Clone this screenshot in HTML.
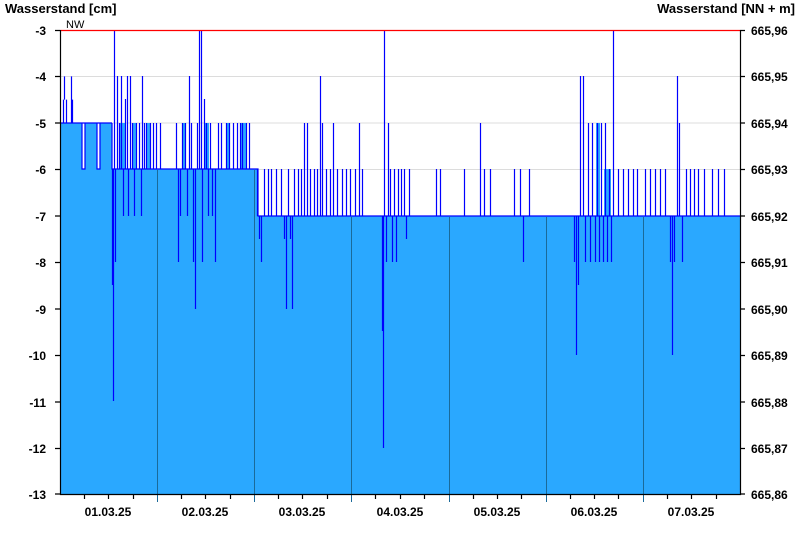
<!DOCTYPE html>
<html><head><meta charset="utf-8"><style>
html,body{margin:0;padding:0;background:#fff;}
svg{display:block;font-family:"Liberation Sans",Arial,sans-serif;font-weight:bold;font-size:12px;}
</style></head><body>
<svg width="800" height="550" viewBox="0 0 800 550" xmlns="http://www.w3.org/2000/svg">
<text x="5" y="13" font-size="13">Wasserstand [cm]</text>
<text x="795" y="13" font-size="13" text-anchor="end">Wasserstand [NN + m]</text>
<g stroke="#dcdcdc" stroke-width="1">
<path d="M60 76.5H740M60 123H740M60 169.5H740M60 216H740M60 262.5H740M60 309H740M60 355.5H740M60 402H740M60 448.5H740"/>
</g>
<path fill="#2aa8ff" d="M60 123H82V169H85V123H97V169H100V123H112V169H175V169H258V216H740V494H60Z"/>
<path fill="#2aa8ff" d="M120 169V123H126V169ZM133 169V123H137V169ZM146 169V123H150V169ZM182 169V123H186V169ZM205 169V123H209V169ZM226 169V123H230V169ZM240 169V123H246V169ZM596 216V123H600V216ZM604 216V169H611V216Z"/>
<g stroke="#0000ff" stroke-width="1.2" fill="none">
<path d="M60.5 123H112M63.5 123V99.6M64.5 99.6V76.4M66.5 99.6V123M71.5 123V76.4M72.5 99.6V123M82 123V169H85V123M97 123V169H100V123M112 123V169H175V169H258V216H740"/>
<path d="M112.5 169V285M113.5 169V401M114.5 169V30M115.5 169V262M117.5 169V76M119.5 169V123M121.5 169V76M123.5 169V216M125.5 169V99M127.5 169V76M128.5 169V216M130.5 169V76M132.5 169V123M134.5 169V216M136.5 169V123M139.5 169V123M141.5 169V216M142.5 169V76M144.5 169V123M146.5 169V123M150.5 169V123M153.5 169V123M156.5 169V123M160.5 169V123"/>
<path d="M176.5 169V123M178.5 169V262M180.5 169V216M182.5 169V123M185.5 169V123M187.5 169V216M189.5 169V76M191.5 169V123M193.5 169V262M195.5 169V309M197.5 169V123M199.5 169V30M201.5 169V30M202.5 169V262M204.5 169V99M206.5 169V123M208.5 169V216M210.5 169V123M212.5 169V216M215.5 169V262M218.5 169V123M221.5 169V123M226.5 169V123M229.5 169V123M233.5 169V123M237.5 169V123M240.5 169V123M242.5 169V123M246.5 169V123M249.5 169V123"/>
<path d="M257.5 216V169M259.5 216V239M261.5 216V262M264.5 216V169M268.5 216V169M271.5 216V169M276.5 216V169M281.5 216V169M284.5 216V239M286.5 216V309M288.5 216V169M290.5 216V239M292.5 216V309M294.5 216V169M298.5 216V169M301.5 216V169M304.5 216V123M307.5 216V123M310.5 216V169M314.5 216V169M317.5 216V169M320.5 216V76M322.5 216V123M326.5 216V169M330.5 216V169M333.5 216V123M337.5 216V169M342.5 216V169M346.5 216V169M350.5 216V169M355.5 216V169M359.5 216V123M362.5 216V169"/>
<path d="M382.5 216V331M383.5 216V448M384.5 216V30M386.5 216V262M388.5 216V123M390.5 216V169M392.5 216V262M394.5 216V169M396.5 216V262M398.5 216V169M401.5 216V169M404.5 216V169M406.5 216V239M409.5 216V169M436.5 216V169M440.5 216V169M464.5 216V169M480.5 216V123M484.5 216V169M490.5 216V169M514.5 216V169M520.5 216V169M523.5 216V262M529.5 216V169"/>
<path d="M574.5 216V262M576.5 216V355M578.5 216V285M580.5 216V76M583.5 216V76M585.5 216V262M588.5 216V123M590.5 216V262M592.5 216V123M595.5 216V262M597.5 216V123M599.5 216V262M601.5 216V123M603.5 216V262M605.5 216V123M607.5 216V262M609.5 216V169M611.5 216V262M613.5 216V30M618.5 216V169M623.5 216V169M628.5 216V169M633.5 216V169M637.5 216V169M645.5 216V169M650.5 216V169M655.5 216V169M660.5 216V169M665.5 216V169M670.5 216V262M672.5 216V355M674.5 216V262M677.5 216V76M679.5 216V123M682.5 216V262M686.5 216V169M690.5 216V169M694.5 216V169M698.5 216V169M704.5 216V169M712.5 216V169M718.5 216V169M724.5 216V169"/>
</g>
<g stroke="#1a6a9a" stroke-width="1">
<path d="M157.5 170V502M254.5 170V502M351.5 217V502M449.5 217V502M546.5 217V502M643.5 217V502"/>
</g>
<path d="M60 30.5H740" stroke="#ff0000" stroke-width="1.2"/>
<text x="66" y="28" font-weight="normal" font-size="11">NW</text>
<g stroke="#000" stroke-width="1.2" fill="none">
<path d="M60.5 30V494.5H740.5V30"/>
<path d="M55 30.5H60M55 76.5H60M55 123H60M55 169.5H60M55 216H60M55 262.5H60M55 309H60M55 355.5H60M55 402H60M55 448.5H60M55 494H60"/>
<path d="M740 30.5H745M740 76.5H745M740 123H745M740 169.5H745M740 216H745M740 262.5H745M740 309H745M740 355.5H745M740 402H745M740 448.5H745M740 494H745"/>
<path d="M84.5 494V499M108.5 494V499M133.5 494V499M181.5 494V499M205.5 494V499M230.5 494V499M278.5 494V499M302.5 494V499M327.5 494V499M375.5 494V499M400.5 494V499M424.5 494V499M473.5 494V499M497.5 494V499M521.5 494V499M570.5 494V499M594.5 494V499M618.5 494V499M667.5 494V499M691.5 494V499M716.5 494V499"/>
</g>
<g text-anchor="end">
<text x="46" y="35">-3</text><text x="46" y="81">-4</text><text x="46" y="128">-5</text><text x="46" y="174">-6</text><text x="46" y="221">-7</text><text x="46" y="267">-8</text><text x="46" y="314">-9</text><text x="46" y="360">-10</text><text x="46" y="407">-11</text><text x="46" y="453">-12</text><text x="46" y="499">-13</text>
</g>
<g>
<text x="751" y="35">665,96</text><text x="751" y="81">665,95</text><text x="751" y="128">665,94</text><text x="751" y="174">665,93</text><text x="751" y="221">665,92</text><text x="751" y="267">665,91</text><text x="751" y="314">665,90</text><text x="751" y="360">665,89</text><text x="751" y="407">665,88</text><text x="751" y="453">665,87</text><text x="751" y="499">665,86</text>
</g>
<g text-anchor="middle">
<text x="108" y="516">01.03.25</text><text x="205" y="516">02.03.25</text><text x="302" y="516">03.03.25</text><text x="400" y="516">04.03.25</text><text x="497" y="516">05.03.25</text><text x="594" y="516">06.03.25</text><text x="691" y="516">07.03.25</text>
</g>
</svg>
</body></html>
